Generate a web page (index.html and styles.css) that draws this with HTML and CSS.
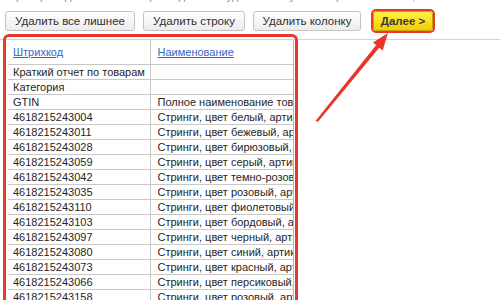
FILE: index.html
```html
<!DOCTYPE html>
<html lang="ru">
<head>
    <meta charset="UTF-8">
    <title>Загрузка товаров</title>
    <link rel="stylesheet" href="styles.css">
</head>
<body>
    <p class="hint">Проверьте данные в таблице. Выделите и удалите ненужные строки и колонки, а затем нажмите «Далее».</p>

    <div class="toolbar">
        <button class="btn btn-wide">Удалить все лишнее</button>
        <button class="btn btn-row">Удалить строку</button>
        <button class="btn btn-col">Удалить колонку</button>
        <button class="btn btn-next">Далее &gt;</button>
    </div>

    <div class="grid-area">
        <div class="grid-scroll">
            <table class="grid">
                <colgroup>
                    <col class="col-code">
                    <col class="col-name">
                </colgroup>
                <thead>
                    <tr>
                        <th><a href="#">Штрихкод</a></th>
                        <th><a href="#">Наименование</a></th>
                    </tr>
                </thead>
                <tbody>
                    <tr><td>Краткий отчет по товарам</td><td></td></tr>
                    <tr><td>Категория</td><td></td></tr>
                    <tr><td>GTIN</td><td>Полное наименование товара</td></tr>
                    <tr><td>4618215243004</td><td>Стринги, цвет белый, артикул 3004</td></tr>
                    <tr><td>4618215243011</td><td>Стринги, цвет бежевый, артикул 3011</td></tr>
                    <tr><td>4618215243028</td><td>Стринги, цвет бирюзовый, артикул 3028</td></tr>
                    <tr><td>4618215243059</td><td>Стринги, цвет серый, артикул 3059</td></tr>
                    <tr><td>4618215243042</td><td>Стринги, цвет темно-розовый, артикул 3042</td></tr>
                    <tr><td>4618215243035</td><td>Стринги, цвет розовый, артикул 3035</td></tr>
                    <tr><td>4618215243110</td><td>Стринги, цвет фиолетовый, артикул 3110</td></tr>
                    <tr><td>4618215243103</td><td>Стринги, цвет бордовый, артикул 3103</td></tr>
                    <tr><td>4618215243097</td><td>Стринги, цвет черный, артикул 3097</td></tr>
                    <tr><td>4618215243080</td><td>Стринги, цвет синий, артикул 3080</td></tr>
                    <tr><td>4618215243073</td><td>Стринги, цвет красный, артикул 3073</td></tr>
                    <tr><td>4618215243066</td><td>Стринги, цвет персиковый, артикул 3066</td></tr>
                    <tr><td>4618215243158</td><td>Стринги, цвет розовый, артикул 3158</td></tr>
                </tbody>
            </table>
        </div>
    </div>

    <!-- annotation overlays -->
    <div class="mark-box"></div>
    <svg class="mark-arrow" width="500" height="300" viewBox="0 0 500 300">
        <polygon points="315.5,121 318,121.8 379.4,47.6 376.2,45" fill="#e8352b"/>
        <polygon points="388,33 382.6,50.4 373,42.4" fill="#e8352b"/>
    </svg>
</body>
</html>
```

FILE: styles.css
```css
* {
    margin: 0;
    padding: 0;
    box-sizing: border-box;
}

body {
    font-family: "Liberation Sans", Arial, sans-serif;
    font-size: 11px;
    color: #262626;
    background-color: #ffffff;
    width: 500px;
    height: 300px;
    overflow: hidden;
    position: relative;
}

.hint {
    height: 13px;
    margin-top: -10px;
    padding-left: 8px;
    font-size: 11px;
    line-height: 13px;
    color: #8a8a8a;
    white-space: nowrap;
    overflow: hidden;
}

.toolbar {
    display: flex;
    gap: 8px;
    padding: 8px 5px 0;
    height: 36px;
}

.btn {
    height: 20px;
    padding: 0 4px;
    font-family: inherit;
    font-size: 11.5px;
    white-space: nowrap;
    color: #2e2e2e;
    background: linear-gradient(#ffffff, #ececec);
    border: 1px solid #c4c4c4;
    border-radius: 3px;
}

.btn-wide {
    width: 130px;
}

.btn-row {
    width: 102px;
}

.btn-col {
    width: 108px;
}

.btn-next {
    width: 60px;
    margin-left: 4px;
    padding: 0;
    font-size: 11.5px;
    font-weight: bold;
    color: #3a3a3a;
    background: linear-gradient(#fff04a, #f5cc00);
    border: 1px solid #c9a300;
    box-shadow: 0 0 0 2px #e53a2b;
}

.grid-area {
    border-top: 1px solid #d4d4d4;
    padding-left: 8px;
}

.grid-scroll {
    width: 286px;
    overflow: hidden;
    border-right: 1px solid #b8b8b8;
}

.grid {
    table-layout: fixed;
    width: 420px;
    border-collapse: collapse;
}

.col-code {
    width: 142px;
}

.col-name {
    width: 278px;
}

.grid th {
    height: 24px;
    padding: 0 6px 0 5px;
    text-align: left;
    font-weight: normal;
    border-bottom: 1px solid #c8c8c8;
}

.grid th + th,
.grid td + td {
    border-left: 1px solid #c8c8c8;
    padding-left: 7px;
}

.grid th a {
    color: #3766c4;
    text-decoration: underline;
}

.grid td {
    height: 15px;
    padding: 0 6px 0 5px;
    line-height: 14px;
    white-space: nowrap;
    overflow: hidden;
    border-bottom: 1px solid #c8c8c8;
}

.mark-box {
    position: absolute;
    left: 3px;
    top: 34px;
    width: 295px;
    height: 280px;
    border: 3px solid #e5392d;
    border-radius: 6px;
}

.mark-arrow {
    position: absolute;
    left: 0;
    top: 0;
}
```
